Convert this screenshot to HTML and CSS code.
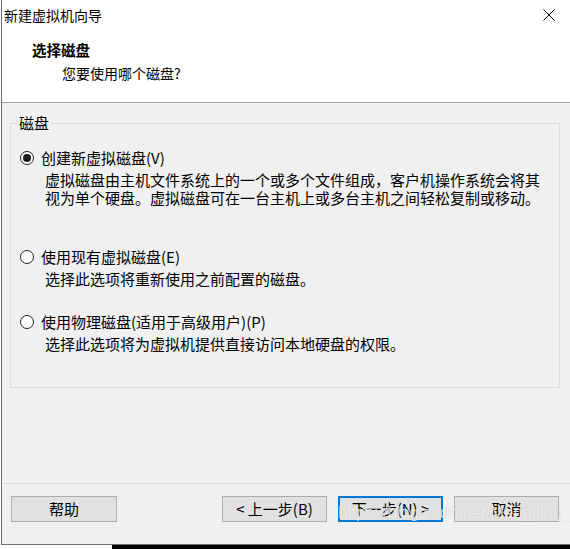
FILE: index.html
```html
<!DOCTYPE html>
<html lang="zh-CN">

<head>
    <meta charset="UTF-8">
    <title>新建虚拟机向导</title>
    <link rel="stylesheet" href="styles.css">
</head>

<body>
    <div class="window">
        <!-- titel -->
        <div class="titlebar">
            <span class="title">新建虚拟机向导</span>
            <svg class="close" width="12" height="12" viewBox="0 0 12 12">
                <path d="M0.5 0.5 L11.5 11.5 M11.5 0.5 L0.5 11.5" stroke="#000" stroke-width="1" fill="none" />
            </svg>
        </div>

        <header class="wizard-head">
            <h1>选择磁盘</h1>
            <p>您要使用哪个磁盘?</p>
        </header>

        <main class="content">
            <fieldset class="group">
                <legend>磁盘</legend>

                <div class="option first">
                    <label class="choice"><span class="radio checked"></span>创建新虚拟磁盘(V)</label>
                    <p class="desc">虚拟磁盘由主机文件系统上的一个或多个文件组成，客户机操作系统会将其<br>视为单个硬盘。虚拟磁盘可在一台主机上或多台主机之间轻松复制或移动。</p>
                </div>

                <div class="option">
                    <label class="choice"><span class="radio"></span>使用现有虚拟磁盘(E)</label>
                    <p class="desc">选择此选项将重新使用之前配置的磁盘。</p>
                </div>

                <div class="option">
                    <label class="choice"><span class="radio"></span>使用物理磁盘(适用于高级用户)(P)</label>
                    <p class="desc">选择此选项将为虚拟机提供直接访问本地硬盘的权限。</p>
                </div>
            </fieldset>
        </main>

        <footer class="buttons">
            <button class="btn">帮助</button>
            <div class="nav">
                <button class="btn">&lt; 上一步(B)</button>
                <button class="btn default">下一步(N) &gt;</button>
                <button class="btn">取消</button>
            </div>
            <span class="watermark">https://blog.csdn.net/MengJing_</span>
        </footer>
    </div>
    <div class="strip"><div class="black"></div></div>
</body>

</html>
```

FILE: styles.css
```css
body {
    margin: 0;
    width: 570px;
    height: 549px;
    overflow: hidden;
    background-color: white;
    font-family: "Noto Sans CJK SC", "Noto Sans", sans-serif;
    color: #000;
}

.window {
    margin-left: 1px;
    height: 544px;
    border-left: 1px solid #707070;
    border-bottom: 1px solid #707070;
    display: flex;
    flex-direction: column;
    background-color: #f0f0f0;
}

/* titel */

.titlebar {
    height: 30px;
    background-color: white;
    display: flex;
    align-items: center;
    justify-content: space-between;
    padding: 0 15px 0 2px;
}

.title {
    font-size: 14px;
    line-height: 20px;
}

.close {
    display: block;
}

.wizard-head {
    background-color: white;
    border-bottom: 1px solid #a0a0a0;
    padding: 10px 0 0 30px;
    box-sizing: border-box;
    height: 73px;
}

.wizard-head h1 {
    margin: 0;
    font-size: 14.5px;
    line-height: 20px;
    font-weight: bold;
}

.wizard-head p {
    margin: 3px 0 0 30px;
    font-size: 14px;
    line-height: 20px;
}

/* indhold */

.content {
    flex: 1;
    padding: 12px 10px 0 8px;
}

.group {
    margin: 0;
    min-width: 0;
    border: 1px solid #dcdcdc;
    padding: 0 10px 34px 6px;
}

.group legend {
    font-size: 15px;
    line-height: 16px;
    padding: 0 2px;
}

.option {
    margin-left: 3px;
}

.option.first {
    padding-top: 17px;
    padding-bottom: 16px;
}

.option + .option {
    margin-top: 24px;
}

.choice {
    display: flex;
    align-items: center;
    font-size: 15px;
    line-height: 20px;
}

.radio {
    width: 14px;
    height: 14px;
    box-sizing: border-box;
    border: 1px solid #222;
    border-radius: 50%;
    background-color: white;
    margin-right: 7px;
    display: flex;
    align-items: center;
    justify-content: center;
}

.radio.checked::after {
    content: "";
    width: 8px;
    height: 8px;
    border-radius: 50%;
    background-color: #1a1a1a;
}

.desc {
    margin: 3px 0 0 25px;
    font-size: 15px;
    line-height: 18px;
}

/* knapper */

.buttons {
    position: relative;
    height: 48px;
    border-top: 1px solid #dcdcdc;
    display: flex;
    justify-content: space-between;
    padding: 12px 11px 0 9px;
}

.nav {
    display: flex;
    gap: 11px;
}

.btn {
    width: 106px;
    height: 26px;
    background-color: #e1e1e1;
    border: 1px solid #adadad;
    font-family: "Noto Sans CJK SC", "Noto Sans", sans-serif;
    font-size: 15px;
    line-height: 20px;
    padding: 0;
    color: #000;
}

.nav .btn {
    width: 105px;
}

.btn.default {
    border: 2px solid #0078d7;
}

.watermark {
    position: absolute;
    left: 336px;
    top: 19px;
    font-family: "Liberation Sans", Arial, sans-serif;
    font-size: 16.5px;
    color: rgba(255, 255, 255, 0.75);
    text-shadow: 0 0 1px rgba(0, 0, 0, 0.2);
    pointer-events: none;
}

.strip {
    height: 4px;
    background-color: white;
}

.black {
    margin-left: 112px;
    height: 4px;
    background-color: black;
}
```
